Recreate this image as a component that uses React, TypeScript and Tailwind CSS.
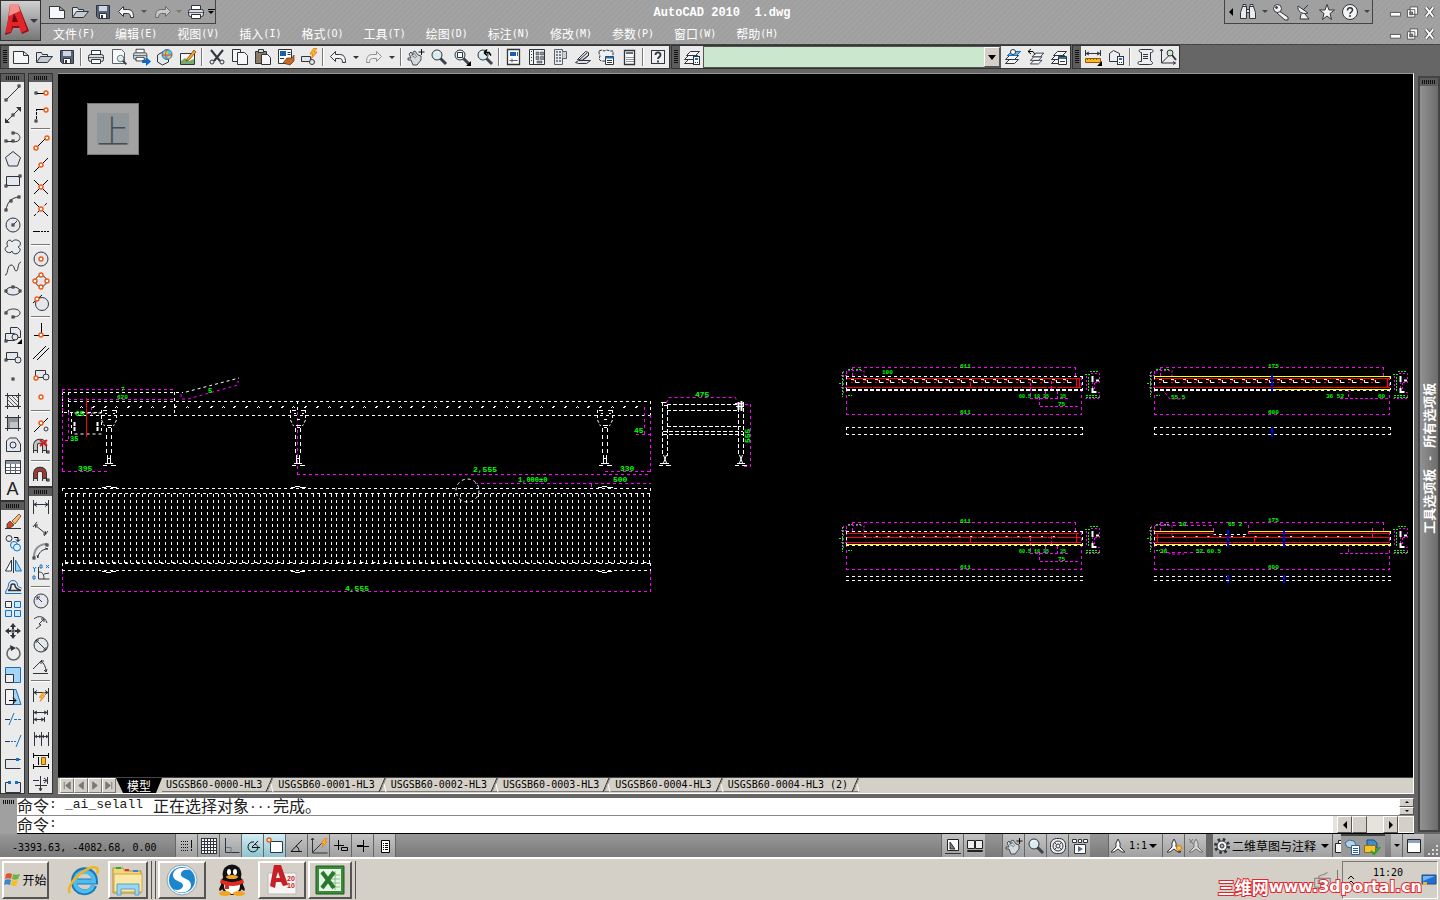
import type { ReactNode } from "react";

const INK = "#30353d";
const ORANGE = "#f0590f";
const BLUE = "#1273c4";

/* ---------- icon primitives ---------- */

function Sq({ x, y }: { x: number; y: number }) {
    return <rect x={x - 1} y={y - 1} width="2" height="2" fill="#ebebeb" stroke="#222" />;
}

function Dot({ x, y }: { x: number; y: number }) {
    return <circle cx={x} cy={y} r="2" fill="#fff" stroke={ORANGE} strokeWidth="1.4" />;
}

const sheet = <path d="M1.5 3.5h10l5 4v8h-15z M11.5 3.5v4h5" fill="#f6f7f9" stroke={INK} />;
const folder = (
    <g stroke={INK}>
        <path d="M1.5 14V4.5h5l1 2h5v3" fill="#dfe3e8" />
        <path d="M1.5 14.5l4-6h12l-5 6z" fill="#c3cad1" />
    </g>
);
const floppy = (
    <g>
        <path d="M2.5 2.5h13v13h-11l-2-2z" fill="#56657a" stroke={INK} />
        <path d="M5 3h8v5H5z" fill="#cdd6e2" />
        <path d="M5.5 10.5h7v5h-7z" fill="#fff" stroke={INK} />
        <path d="M7 12h2v3H7z" fill={INK} />
    </g>
);
const undo = <path d="M1.5 8.5l5-5v3h4c4 0 6 2 6 8h-3c0-3-1-4-3-4h-4v3z" fill="#f3f4f6" stroke={INK} />;
const printer = (
    <g stroke={INK}>
        <path d="M4.5 6V2.5h9V6" fill="#fff" />
        <rect x="1.5" y="6.5" width="15" height="7" rx="2" fill="#d7dbe0" />
        <path d="M4.5 11.5h9v4h-9z" fill="#fff" />
        <path d="M2 9.5h14" stroke="#59616c" />
    </g>
);
const lens = (
    <g>
        <path d="M10 10l6 6" stroke="#3b434d" strokeWidth="3" />
        <circle cx="7" cy="7" r="5" fill="#d9edf0" stroke={INK} />
        <path d="M4 6c1-2 3-3 5-2" stroke="#fff" fill="none" />
    </g>
);
const hand = (
    <g>
        <path d="M2 6l2-2 2 3 0-3 2-1 3 4 3 1v4l-4 5H6L4 12H1l0-2 3 0z" fill="#d5dadf" stroke="#454c55" />
        <path d="M4 7l5 3M7 5l3 4" stroke="#79818a" />
        <path d="M14.5 1v6M11.5 4h6" stroke="#111" />
    </g>
);
const bolt = <path d="M12 2l-4 6h3l-2 5 6-7h-3l3-4z" fill="#ffc21e" stroke="#e26c0e" strokeWidth=".8" />;
const layers = (
    <g stroke={INK} fill="#f5f6f8">
        <path d="M1.5 15.5l4-4h9l-4 4z" />
        <path d="M1.5 11.5l4-4h9l-4 4z" />
        <path d="M3.5 7.5l4-4h9l-4 4z" />
    </g>
);
const calc = (
    <g>
        <rect x="10.5" y="8.5" width="6" height="8" fill="#fff" stroke={INK} />
        <path d="M12 10h3v2h-3z" fill={BLUE} />
        <path d="M12 14.5h3" stroke={INK} strokeDasharray="1 1" />
    </g>
);
const dimBar = (
    <path d="M1.5 2v14M16.5 2v14M2 6.5h14M5 4.5l-3 2 3 2M13 4.5l3 2-3 2" fill="none" stroke={INK} />
);
const magnet = (c: string) => (
    <g>
        <path d="M3.5 15V7c0-5 9-5 9 0v8" fill="none" stroke="#333" strokeWidth="5" />
        <path d="M3.5 12V7c0-5 9-5 9 0v5" fill="none" stroke={c} strokeWidth="3" />
        <path d="M2 13h3v2H2zM11 13h3v2h-3z" fill="#ddd" />
        <Sq x={16} y={14} />
    </g>
);
const person = (c: string) => <path d="M9 2l2 4v4l5 5h-3l-4-3-4 3H2l5-5V6z" fill="#fafafa" stroke={c} />;

const icons: Record<string, ReactNode> = {
    new: sheet,
    open: folder,
    save: floppy,
    undo,
    redo: <g transform="translate(18 0) scale(-1 1)" opacity=".5">{undo}</g>,
    print: printer,
    preview: (
        <g>
            <path d="M2.5 1.5h9l3 3v11h-12z" fill="#f8f8f8" stroke="#59616c" />
            <g transform="translate(6 6) scale(.65)">{lens}</g>
        </g>
    ),
    publish: (
        <g>
            <g transform="translate(-1 -1) scale(.9)">{printer}</g>
            <path d="M9 12h4V9l5 4.5-5 4.5v-3H9z" fill="#0c68c8" />
        </g>
    ),
    globe: (
        <g>
            <path d="M1.5 7l5-3 6 3v7l-6 3-5-3z" fill="#e6eaee" stroke={INK} />
            <circle cx="11" cy="6.5" r="5" fill="#5cc5ef" stroke="#3b6f94" />
            <path d="M8 4l3-1 1 3-3 2zM12 8l3-1-2 4z" fill="#f5d21c" />
            <path d="M11 2c-2 3-2 6 0 9M6 7h10" stroke="#e2462a" fill="none" />
        </g>
    ),
    markup: (
        <g>
            <path d="M1.5 5.5h14v11h-14z" fill="#f4f7f4" stroke={INK} />
            <path d="M2 13l4-3 4 3 5-2v5H2z" fill="#79a86c" />
            <path d="M8 11l7-9 2 2-7 8-3 1z" fill="#f5a623" stroke="#7b3b0c" strokeWidth=".7" />
        </g>
    ),
    cut: (
        <g fill="none" stroke={INK}>
            <path d="M3 2l9 11M15 2L6 13" strokeWidth="2" />
            <circle cx="4" cy="14" r="2" />
            <circle cx="14" cy="14" r="2" />
        </g>
    ),
    copy: (
        <g stroke={INK} fill="#f7f7f9">
            <path d="M1.5 1.5h8v12h-8z" />
            <path d="M6.5 4.5h7l3 3v9h-10z" />
        </g>
    ),
    paste: (
        <g stroke={INK}>
            <path d="M1.5 3.5h11v12h-11z" fill="#8c7b62" />
            <path d="M4.5 1.5h5v3h-5z" fill="#d5d8dc" />
            <path d="M7.5 6.5h6l3 3v7h-9z" fill="#f7f7f9" />
        </g>
    ),
    match: (
        <g>
            <path d="M1.5 1.5h13v14h-13z" fill="#fff" stroke={INK} />
            <path d="M3 3h6v5H3z" fill="#1c5fae" />
            <path d="M10.5 4.5h3M10.5 6.5h3M3 10.5h4" stroke={INK} />
            <path d="M6 15l4-5 5 0 2-3 0 6-4 4z" fill="#c46a28" stroke="#64310c" strokeWidth=".7" />
        </g>
    ),
    block: (
        <g>
            <path d="M1.5 8.5h9v5h-9z" fill="#dfe4ea" stroke={INK} />
            <circle cx="12" cy="14" r="2.5" fill="#e5e9ee" stroke={INK} />
            <g transform="translate(2 -2)">{bolt}</g>
        </g>
    ),
    pan: hand,
    zoom: lens,
    zoomWin: (
        <g>
            {lens}
            <path d="M4.5 4.5h5v5h-5z" fill="#fff" stroke={INK} />
            <path d="M18 13v5h-5z" fill="#000" />
        </g>
    ),
    zoomPrev: (
        <g>
            {lens}
            <path d="M8 4.5h5l2 3M8 4.5l3-3M8 4.5l3 3" stroke="#000" strokeWidth="1.5" fill="none" />
        </g>
    ),
    props: (
        <g>
            <path d="M2.5 1.5h12v15h-12z" fill="#fff" stroke={INK} strokeWidth="1.3" />
            <path d="M5 4h6v4H5z" fill="#1c5fae" />
            <path d="M4.5 12.5h8M7 10.5v4M12.5 4v4" stroke="#555e69" />
        </g>
    ),
    design: (
        <g>
            <path d="M1.5 1.5h15v15h-15zM5.5 2v14" fill="#f4f5f7" stroke={INK} />
            <path d="M8 4h3v3H8zM12.5 4h3v3h-3zM8 8.5h3v3H8zM12.5 8.5h3v3h-3zM9 13h5v2H9z" fill="#8e97a2" stroke={INK} strokeWidth=".5" />
            <path d="M3.5 3v12" stroke={INK} strokeDasharray="1 2" />
        </g>
    ),
    palettes: (
        <g>
            <path d="M3.5 1.5h8v15h-8z" fill="#e9ebee" stroke="#59616c" />
            <path d="M11.5 3.5h4v7h-4" fill="#cdd2d8" stroke="#59616c" />
            <path d="M6 3v12M9 3v12" stroke="#7b838d" strokeWidth="2" strokeDasharray="2 1" />
        </g>
    ),
    sheets: (
        <g stroke={INK} fill="#dfe3e8">
            <path d="M1.5 14.5l3-2h12l-4 3h-8z" />
            <path d="M3.5 11.5l8-8 3 1v3l-6 5z" />
            <path d="M5 12l8-7M7 13l8-6" />
        </g>
    ),
    markups: (
        <g>
            <path d="M2 3l3-1 2 1 3-1 3 1 3 0 0 4-1 2 1 3-3 1H4l-2-2 1-3-1-3z" fill="#eef0f3" stroke={INK} strokeDasharray="3 1" />
            <path d="M8.5 8.5h8v8h-8z" fill="#fff" stroke={INK} />
            <path d="M8.5 9.5h8" stroke={BLUE} strokeWidth="2" />
            <path d="M10 12.5h5M10 14.5h5" stroke={INK} />
        </g>
    ),
    calc: (
        <g>
            <path d="M4.5 2.5h10v14h-10z" fill="#fafafa" stroke={INK} strokeWidth="1.3" />
            <path d="M6 4h7v2H6z" fill="#60707f" />
            <path d="M6.5 9.5h7M6.5 11.5h7M6.5 13.5h7" stroke={INK} strokeDasharray="1 1" />
        </g>
    ),
    help: (
        <g>
            <rect x="2.5" y="2.5" width="13" height="13" fill="#eef0f3" stroke={INK} />
            <path d="M6.5 7c0-3.5 5-3.5 5 0 0 2-2.5 2-2.5 4M9 12.5v2" fill="none" stroke={INK} strokeWidth="1.8" />
        </g>
    ),
    layerProps: (
        <g>
            {layers}
            {calc}
        </g>
    ),
    layerCur: (
        <g>
            {layers}
            <path d="M3.5 7.5l4-4h9l-4 4z" fill="#63b6ec" stroke={BLUE} />
            <circle cx="9" cy="4" r="2.5" fill="#fff" stroke={INK} />
        </g>
    ),
    layerPrev: (
        <g>
            <g transform="translate(2 2) scale(.9)">{layers}</g>
            <path d="M1 3.5h5l2 3M4 1L1 3.5 4 6" stroke="#000" fill="none" />
        </g>
    ),
    layerState: (
        <g>
            {layers}
            <path d="M8.5 8.5h8v8h-8z" fill="#fff" stroke={INK} />
            <path d="M9 10h7" stroke="#34739c" strokeWidth="2" />
            <path d="M10 13.5h5" stroke={INK} />
        </g>
    ),
    distance: (
        <g>
            <path d="M1.5 2v6M16.5 2v6M2 5.5h14M5 4l-3 1.5L5 7M13 4l3 1.5L13 7" stroke={INK} fill="none" />
            <path d="M1.5 10.5h15v4h-15z" fill="#ffb91f" stroke="#94580d" />
            <path d="M3 11.5h12" stroke="#94580d" strokeDasharray="1 2" />
            <path d="M18 13v5h-5z" />
        </g>
    ),
    region: (
        <g>
            <path d="M2.5 13.5v-8l4-3 6 3v8z" fill="#eceef1" stroke={INK} />
            {calc}
        </g>
    ),
    list: (
        <g>
            <path d="M4.5 1.5h11c2 0 2 3 0 3h-1v8l2 2c0 2-1 2-3 2h-10c-2 0-2-3 0-3h2v-9c-3 0-3-3-1-3z" fill="#eceef1" stroke={INK} />
            <path d="M7 6.5h5M7 8.5h5M7 10.5h5" stroke={INK} />
        </g>
    ),
    locate: (
        <g fill="none" stroke={INK}>
            <path d="M2.5 1v14h14M2.5 15l9-9M1 3l1.5-2L4 3M14 13.5l2.5 1.5-2.5 1.5" />
            <circle cx="11" cy="5" r="3" fill="#cbe7cb" />
            <path d="M13 7l4 5" strokeWidth="2" />
        </g>
    ),
    /* draw */
    line: (
        <g>
            <path d="M2 16L16 2" stroke={INK} />
            <Sq x={2} y={16} />
            <Sq x={15} y={2} />
        </g>
    ),
    xline: (
        <g>
            <path d="M2 16L16 2" stroke={INK} />
            <path d="M1 12v5h5zM17 6V1h-5z" fill={INK} />
            <Sq x={9} y={9} />
        </g>
    ),
    pline: (
        <g>
            <path d="M2 13.5h7c9 2 9-9 1-8.5" stroke={INK} fill="none" />
            <Sq x={2} y={13} />
            <Sq x={9} y={13} />
            <Sq x={9} y={5} />
        </g>
    ),
    polygon: <path d="M9 1.5l7.5 6-3 8.5h-9l-3-8.5z" fill="#e4e8ec" stroke={INK} />,
    rect: (
        <g>
            <path d="M2.5 4.5h13v9h-13z" fill="#e4e8ec" stroke={INK} />
            <Sq x={2} y={14} />
            <Sq x={16} y={4} />
        </g>
    ),
    arc: (
        <g>
            <path d="M2 16C3 9 7 3 16 3" stroke={INK} fill="none" />
            <Sq x={2} y={16} />
            <Sq x={7} y={7} />
            <Sq x={15} y={3} />
        </g>
    ),
    circle: (
        <g>
            <circle cx="9" cy="9" r="7" fill="#e4e8ec" stroke={INK} />
            <path d="M9 9l4-4" stroke={INK} />
            <Sq x={9} y={9} />
        </g>
    ),
    cloud: (
        <path
            d="M8 4c-1-3-5-2-5 1 0 1 0 2 1 3-3 1-4 4-1 6 2 1 4 1 5-1 0 3 5 4 7 1 2-2 1-4-1-5 3-1 3-5 1-6-3-2-6-1-7 1z"
            fill="#e9ecef"
            stroke={INK}
        />
    ),
    spline: <path d="M1 15c3 1 2-10 6-10s3 6 5 6c3 0 1-8 5-9" stroke={INK} fill="none" />,
    ellipse: (
        <g>
            <ellipse cx="9" cy="9" rx="7" ry="4" fill="#e4e8ec" stroke={INK} />
            <Sq x={2} y={9} />
            <Sq x={16} y={9} />
            <Sq x={9} y={5} />
        </g>
    ),
    ellipseArc: (
        <g>
            <path d="M2 10c-1-6 14-7 14-1 0 4-7 4-7 4" fill="none" stroke={INK} />
            <Sq x={2} y={9} />
            <Sq x={9} y={13} />
        </g>
    ),
    insert: (
        <g stroke={INK} fill="#e4e8ec">
            <path d="M6.5 1.5h7l3 3v7h-10z" />
            <path d="M1.5 7.5h9v7h-9z" />
            <circle cx="11" cy="11" r="3" />
            <path d="M18 13v5h-5z" fill="#000" stroke="none" />
            <Sq x={2} y={15} />
        </g>
    ),
    makeBlock: (
        <g stroke={INK} fill="#e4e8ec">
            <path d="M2.5 4.5h11v7h-11z" />
            <circle cx="14" cy="12" r="3" />
            <Sq x={2} y={12} />
        </g>
    ),
    point: <Sq x={9} y={9} />,
    hatch: (
        <g stroke={INK} fill="none">
            <path d="M3.5 1v16M14.5 1v16M1 3.5h16M1 14.5h16" />
            <path d="M4 8l6 6M4 4l10 10M8 4l6 6M12 4l2 2M4 12l2 2" strokeWidth=".8" />
        </g>
    ),
    gradient: (
        <g stroke={INK}>
            <rect x="4" y="4" width="10" height="10" fill="#8f9398" stroke="none" />
            <rect x="6" y="8" width="8" height="6" fill="#c2c5c8" stroke="none" />
            <path d="M3.5 1v16M14.5 1v16M1 3.5h16M1 14.5h16" />
        </g>
    ),
    regionDraw: (
        <g stroke={INK} fill="#e4e8ec">
            <path d="M2.5 15.5V5l3-3h7l4 6v7.5z" />
            <circle cx="9" cy="9" r="3" />
        </g>
    ),
    table: (
        <g>
            <path d="M1.5 2.5h15v13h-15z" fill="#fff" stroke={INK} />
            <path d="M2 3h14v3H2z" fill="#8d949c" />
            <path d="M2 9.5h14M2 12.5h14M6.5 6v9M11.5 6v9" stroke="#59616c" />
        </g>
    ),
    /* modify */
    erase: (
        <g>
            <path d="M1 16.5h16" stroke={INK} />
            <path d="M8 9l7-7 2 2-6 8z" fill="#f0bf7c" stroke="#6f3b10" strokeWidth=".8" />
            <path d="M6 9l4 4-4 3H3v-4z" fill="#d2481d" stroke={INK} strokeWidth=".8" />
        </g>
    ),
    copyObj: (
        <g fill="#dceefb">
            <circle cx="5" cy="4.5" r="3" fill="none" stroke={INK} />
            <path d="M10 3.5h4v4M12 5.5l2 2 2-2" fill="none" stroke="#000" />
            <circle cx="10" cy="11" r="3.5" stroke={BLUE} />
            <circle cx="13" cy="13.5" r="3.5" stroke={BLUE} />
        </g>
    ),
    mirror: (
        <g>
            <path d="M7.5 4v11h-6z" fill="#fff" stroke={INK} />
            <path d="M9.5 1v16" stroke={INK} />
            <path d="M11.5 4v11h6z" fill="#a6d4f4" stroke={BLUE} />
        </g>
    ),
    offset: (
        <g fill="none">
            <path d="M4 12.5h13M4 12.5c3-1 3-3 3-5 0-2 4-2 4 0 0 3 2 3 6 5" stroke={INK} strokeWidth="1.5" />
            <path d="M1.5 15.5h16M1.5 15.5c0-4 3-5 3-8.5 0-6 9-6 9 0 0 2 2 2 4 3" stroke={BLUE} />
        </g>
    ),
    array: (
        <g>
            <path d="M1.5 1.5h6v6h-6z" fill="#f3f3f3" stroke={INK} />
            <path d="M10.5 1.5h6v6h-6zM1.5 10.5h6v6h-6zM10.5 10.5h6v6h-6z" fill="#cfe6f7" stroke={BLUE} />
        </g>
    ),
    move: (
        <g fill={INK}>
            <path d="M9 1l3 4h-2v2H8V5H6zM9 17l3-4h-2v-2H8v2H6zM1 9l4-3v2h2v2H5v2zM17 9l-4-3v2h-2v2h2v2z" />
            <Sq x={9} y={9} />
        </g>
    ),
    rotate: (
        <g>
            <path d="M12 3.5a6.5 6.5 0 1 1-5 0" fill="none" stroke="#59616c" strokeWidth="1.5" />
            <path d="M6 1l6 3-5 3z" fill={INK} />
        </g>
    ),
    scale: (
        <g>
            <path d="M1.5 1.5h15v15h-7v-8h-8z" fill="#a6d4f4" stroke={BLUE} />
            <path d="M1.5 8.5h8v8h-8z" fill="#eee" stroke={INK} />
        </g>
    ),
    stretch: (
        <g>
            <path d="M9 1.5h3l5 15H9z" fill="#a6d4f4" stroke={BLUE} />
            <path d="M1.5 1.5h8v15h-8z" fill="#f3f3f3" stroke={INK} />
            <path d="M5 12.5h7M9 9.5l3 3-3 3" stroke="#000" fill="none" />
        </g>
    ),
    trim: (
        <g stroke={BLUE}>
            <path d="M1 9.5h5" stroke={INK} />
            <path d="M5 15L10 3" />
            <path d="M10 9.5h8" strokeDasharray="3 1" />
        </g>
    ),
    extend: (
        <g stroke={BLUE}>
            <path d="M1 9.5h5" stroke={INK} />
            <path d="M7 9.5h6" strokeDasharray="2 1" />
            <path d="M12 15l5-12" />
        </g>
    ),
    breakPt: (
        <g>
            <path d="M16.5 5.5h-15v9h15" stroke={INK} fill="#e4e8ec" />
            <path d="M12 4h3v3h-3z" fill={BLUE} />
        </g>
    ),
    breakObj: (
        <g>
            <path d="M5 6.5H1.5v10h15v-10H13" stroke={INK} fill="#e4e8ec" />
            <path d="M4 5h3v3H4zM11 5h3v3h-3z" fill={BLUE} />
        </g>
    ),
    /* object snap */
    track: (
        <g>
            <path d="M4 9.5h8" stroke="#000" />
            <Sq x={4} y={9} />
            <Dot x={14} y={9} />
        </g>
    ),
    from: (
        <g>
            <path d="M4.5 3.5H12" stroke="#000" />
            <path d="M4.5 13V3" stroke="#000" strokeDasharray="3 1" />
            <Sq x={4} y={15} />
            <Dot x={14} y={4} />
        </g>
    ),
    endpoint: (
        <g>
            <path d="M4 14L15 3" stroke="#000" />
            <Dot x={4} y={14} />
            <Dot x={15} y={4} />
        </g>
    ),
    midpoint: (
        <g>
            <path d="M2 16L16 2" stroke="#000" />
            <Dot x={9} y={9} />
        </g>
    ),
    intersect: (
        <g>
            <path d="M2 16L16 2M2 2l14 14" stroke="#000" />
            <Dot x={9} y={9} />
        </g>
    ),
    apparent: (
        <g>
            <path d="M2 16L16 2" stroke="#000" strokeDasharray="3 2" />
            <path d="M2 2l14 14" stroke="#000" />
            <Dot x={9} y={9} />
        </g>
    ),
    extension: <path d="M1 9.5h7M9 9.5h2M12 9.5h2M15 9.5h2" stroke="#000" />,
    center: (
        <g>
            <circle cx="9" cy="9" r="7" fill="#e4e8ec" stroke={INK} />
            <Dot x={9} y={9} />
        </g>
    ),
    quadrant: (
        <g>
            <circle cx="9" cy="9" r="5.5" fill="#e4e8ec" stroke={INK} />
            <Dot x={9} y={3} />
            <Dot x={9} y={15} />
            <Dot x={3} y={9} />
            <Dot x={15} y={9} />
        </g>
    ),
    tangent: (
        <g>
            <circle cx="10" cy="10" r="6.5" fill="#e4e8ec" stroke={INK} />
            <path d="M1 9l9-8" stroke="#000" />
            <Dot x={5} y={5} />
        </g>
    ),
    perp: (
        <g>
            <path d="M9.5 1v11M2 13.5h15" stroke="#000" />
            <Dot x={9} y={13} />
        </g>
    ),
    parallel: <path d="M1 15L14 2M5 16L17 4" stroke="#000" />,
    insertPt: (
        <g>
            <path d="M3.5 4.5h10v7h-10z" fill="#e4e8ec" stroke={INK} />
            <circle cx="14" cy="11" r="3" fill="#e4e8ec" stroke={INK} />
            <Dot x={4} y={12} />
        </g>
    ),
    node: <Dot x={9} y={9} />,
    nearest: (
        <g>
            <path d="M2 16L16 2" stroke="#000" />
            <Dot x={9} y={7} />
            <circle cx="14" cy="13" r="2" fill="none" stroke={INK} />
        </g>
    ),
    snapNone: (
        <g>
            {magnet("#c4c4c4")}
            <path d="M8 2l7 6M15 2L8 8" stroke="#d91515" strokeWidth="2" />
        </g>
    ),
    snapSet: magnet("#9b3b35"),
    /* dimension */
    dimLinear: dimBar,
    dimAligned: (
        <g stroke={INK} fill="none">
            <path d="M3 5l11 9M1 7l4-5M12 16l4-5M3 5l1 3M3 5h3M14 14l-3 0M14 14l-1-3" />
        </g>
    ),
    dimArc: (
        <g fill="none" stroke={INK}>
            <path d="M2 15C2 7 7 2 15 2" stroke="#8b9199" strokeWidth="2" />
            <path d="M6 16c0-5 4-9 10-9M6 16l-1-3M16 7l-3-1" />
            <Sq x={2} y={16} />
            <Sq x={15} y={3} />
        </g>
    ),
    dimOrd: (
        <g fill="none">
            <path d="M6.5 3v12h11M7 8c4 0 5 3 5 7M12 10l5-1" stroke={INK} />
            <path d="M1 3l1.5 2L4 3M2.5 5v3M8 1h2v3H8zM14 1l3 3M17 1l-3 3M1 12h2v3H1z" stroke={BLUE} />
        </g>
    ),
    dimRadius: (
        <g stroke={INK}>
            <circle cx="9" cy="9" r="7" fill="#e4e8ec" />
            <path d="M10 10L5 5M5 8V5h3" fill="none" />
        </g>
    ),
    dimJog: (
        <g fill="none" stroke={INK}>
            <path d="M2 5c4-4 11-3 13 4M4 15l5-4-2-1 5-5M9 5h3v3" />
        </g>
    ),
    dimDia: (
        <g stroke={INK}>
            <circle cx="9" cy="9" r="7" fill="#e4e8ec" />
            <path d="M4 4l10 10M4 7V4h3M14 11v3h-3" fill="none" />
        </g>
    ),
    dimAng: <path d="M1 15.5h15M1 11L10 2M9 3c3 2 5 6 5 11M9 6V3h3M12 12l2 2 1-3" fill="none" stroke={INK} />,
    dimQuick: (
        <g>
            {dimBar}
            <g transform="translate(1 5) scale(.8)">{bolt}</g>
        </g>
    ),
    dimBase: <path d="M1.5 2v14M15.5 2v5M12.5 9v5M2 4.5h13M2 11.5h10M5 3L2 4.5 5 6M12 3l3 1.5L12 6M5 10l-3 1.5L5 13M9 10l3 1.5L9 13" stroke={INK} fill="none" />,
    dimCont: <path d="M2.5 2v14M9.5 2v14M16.5 2v14M3 6.5h13M5 5L3 6.5 5 8M7 5l2 1.5L7 8M12 5l-2 1.5L12 8M14 5l2 1.5L14 8" stroke={INK} fill="none" />,
    dimSpace: (
        <g>
            <path d="M1.5 1v5M16.5 1v5M2 3.5h14M1.5 12v5M16.5 12v5M2 14.5h14M6.5 5v8" stroke="#000" fill="none" />
            <path d="M9.5 5.5h4v7h-4z" fill="#ffb91f" stroke="#94580d" />
        </g>
    ),
    dimBreak: <path d="M1 6.5h6M11 6.5h3M15.5 3v7M12 4l3 2.5L12 9M8.5 2v14M3 11.5h12M7 14l1.5 3 1.5-3" stroke={INK} fill="none" />,
    /* info center */
    binoculars: (
        <g fill="#e9ebee" stroke={INK}>
            <path d="M3.5 3.5h4v12h-6v-6zM10.5 3.5h4l2 6v6h-6z" />
            <path d="M4 1.5h3v2H4zM11 1.5h3v2h-3zM7.5 6.5h3v3h-3z" />
        </g>
    ),
    key: (
        <g fill="#f1f2f4" stroke={INK}>
            <path d="M7 8l9 6v3h-3L5 10z" />
            <circle cx="5.5" cy="5.5" r="4" />
            <circle cx="4.5" cy="4.5" r="1" fill={INK} />
        </g>
    ),
    dish: (
        <g fill="#f1f2f4" stroke={INK}>
            <path d="M3 3c-1 5 4 9 10 7z" />
            <path d="M8 7l5-5M6 11l-1 5h9l-4-5" />
        </g>
    ),
    star: <path d="M9 1.5l2 5.5h5.5l-4.5 3.5 1.5 6L9 13l-4.5 3.5 1.5-6L1.5 7H7z" fill="#f4f4f4" stroke={INK} />,
    helpRound: (
        <g>
            <circle cx="9" cy="9" r="7.5" fill="#f4f4f4" stroke={INK} />
            <path d="M6.5 7.5c0-4 5-3.5 5-.5 0 2-2.5 2-2.5 4M9 12v2" fill="none" stroke={INK} strokeWidth="1.5" />
        </g>
    ),
    /* status bar */
    snap: (
        <g stroke="#111">
            <path d="M3 4.5h8M3 7.5h8M3 10.5h8M3 13.5h8" strokeDasharray="1 1" />
            <path d="M13.5 3v8M13.5 12v2" />
        </g>
    ),
    grid: (
        <g>
            <path d="M1 1h16v16H1z" fill="#f6f6f6" />
            <path d="M1.5 1v16M4.5 1v16M7.5 1v16M10.5 1v16M13.5 1v16M16.5 1v16M1 1.5h16M1 4.5h16M1 7.5h16M1 10.5h16M1 13.5h16M1 16.5h16" stroke={INK} />
        </g>
    ),
    ortho: (
        <g fill="none">
            <path d="M3.5 1v14.5h14" stroke={INK} />
            <path d="M4 10.5h5v5" stroke="#5a7893" />
        </g>
    ),
    polar: (
        <g fill="none" stroke="#111">
            <path d="M14 10a5 5 0 1 1-4-5M8 10.5h8M8 10l6-6M11 7c2 1 3 2 3 4" />
        </g>
    ),
    osnap: (
        <g>
            <path d="M4.5 4.5h12v11h-12z" fill="#fff" stroke={INK} />
            <Dot x={3} y={3} />
        </g>
    ),
    otrack: <path d="M14 3L3 14.5h11M8 9c2 1 3 3 3 5" stroke="#111" fill="none" />,
    ducs: (
        <g>
            <path d="M2.5 1v15h15M3 15l9-9M1 3l1.5-2L4 3" stroke={INK} fill="none" />
            <g transform="translate(5 0) scale(.8)">{bolt}</g>
        </g>
    ),
    dyn: <path d="M6.5 3v10M2 8.5h10M9.5 10.5h6v3h-6z" stroke="#000" fill="none" />,
    lwt: (
        <g stroke="#000">
            <path d="M9.5 3v12" />
            <path d="M3 9h7" strokeWidth="2" />
            <path d="M10 9.5h5" />
        </g>
    ),
    qp: (
        <g>
            <path d="M5.5 3.5h8v12h-8z" fill="#fff" stroke="#000" />
            <path d="M7 6.5h6M7 8.5h6M7 10.5h6M7 12.5h6" stroke="#000" strokeDasharray="1 1 3 1" />
        </g>
    ),
    model: (
        <g>
            <path d="M3.5 2.5h11v11h-11z" fill="#fff" stroke="#222" />
            <path d="M6 5l5 7H6zM1 16.5h16" fill="#777" stroke="#333" />
        </g>
    ),
    layouts: (
        <g fill="#eee" stroke="#222">
            <path d="M1.5 3.5h7v8h-7zM9.5 3.5h7v8h-7zM1.5 13.5h15v1h-15z" />
        </g>
    ),
    wheel: (
        <g fill="#eceef1" stroke={INK}>
            <rect x="1.5" y="1.5" width="15" height="15" rx="6" />
            <circle cx="9" cy="9" r="5" />
            <circle cx="9" cy="9" r="2" />
            <path d="M5 5l2 2M13 5l-2 2M5 13l2-2M13 13l-2-2" />
        </g>
    ),
    motion: (
        <g fill="#fff" stroke={INK}>
            <path d="M1.5 2.5h4v3h-4zM7.5 2.5h3v3h-3zM12.5 2.5h4v3h-4zM3.5 7.5h11v9h-11z" />
            <path d="M7 9l5 3-5 3z" fill="#5b6c80" stroke="none" />
        </g>
    ),
    annoVis: (
        <g>
            {person(INK)}
            <circle cx="14" cy="11" r="2.5" fill="#ffc53a" stroke="#d8770e" />
            <path d="M13 14h2v2h-2z" fill="#555" />
        </g>
    ),
    anno: person(INK),
    annoAuto: (
        <g opacity=".5">
            {person(INK)}
            <path d="M2 2l4 5M6 2L3 6" stroke={INK} />
        </g>
    ),
    gear: (
        <g>
            <circle cx="9" cy="9" r="6.5" fill="none" stroke={INK} strokeWidth="3" strokeDasharray="2.5 2.6" />
            <circle cx="9" cy="9" r="5" fill="#f3f3f3" stroke={INK} />
            <circle cx="9" cy="9" r="2" fill="#a8a8a8" stroke={INK} />
        </g>
    ),
    tray: (
        <g>
            <path d="M2 5l4-3 5 1 2 4-4 3-5-1z" fill="#b7d0e4" stroke="#3d6d94" />
            <path d="M8.5 7.5h8v9h-8z" fill="#fff" stroke="#2b6095" />
            <path d="M10 10.5h5M10 12.5h5M10 14.5h5" stroke="#2b6095" />
        </g>
    ),
    xref: (
        <g>
            <path d="M4 2h7l3 3v5H4z" fill="#3e8ed0" stroke="#1d4e83" />
            <path d="M1.5 7.5h11v7h-11z" fill="#f2c52d" stroke="#94700b" />
            <path d="M8 13l3 3 6-7" stroke="#2ca02c" strokeWidth="2" fill="none" />
        </g>
    ),
    window: (
        <g>
            <path d="M2.5 2.5h13v13h-13z" fill="#fff" stroke="#222" />
            <path d="M3 3h12v3H3z" fill="#8fa3bd" />
        </g>
    ),
    lock: <path d="M2.5 6.5h6v9h-6zM5.5 6.5v-3h4v3" fill="#f6f6f6" stroke="#222" />,
};

function Icon({ name }: { name: string }) {
    return (
        <svg className="size-[18px] shrink-0" viewBox="0 0 18 18" fill="#000" aria-hidden="true">
            {icons[name]}
        </svg>
    );
}

function Down({ className = "border-t-[#333]" }: { className?: string }) {
    return <span className={`size-0 border-x-[3px] border-t-[3px] border-x-transparent ${className}`} />;
}

/* ---------- toolbars ---------- */

const SEP = "|";
const DROP = "v";

function Grip({ vertical = false }: { vertical?: boolean }) {
    return vertical ? (
        <div className="flex w-2 shrink-0 items-center justify-center bg-[#5c5c5c]">
            <div className="h-3.5 w-1 bg-[linear-gradient(#111_1px,transparent_1px)] bg-size-[2px_2px]" />
        </div>
    ) : (
        <div className="flex h-2 shrink-0 items-center justify-center bg-[#5c5c5c]">
            <div className="h-1 w-3.5 bg-[linear-gradient(90deg,#111_1px,transparent_1px)] bg-size-[2px_2px]" />
        </div>
    );
}

function HTools({ items }: { items: string[] }) {
    return (
        <>
            {items.map((item, i) => {
                if (item === SEP) return <span key={i} className="mx-[2px] h-[18px] w-[2px] shrink-0 self-center border-l border-[#777] bg-white" />;
                if (item === DROP)
                    return (
                        <button key={i} aria-label="下拉" className="flex w-[13px] shrink-0 items-center justify-center">
                            <Down />
                        </button>
                    );
                return (
                    <button key={i} aria-label={item} className="flex w-[23px] shrink-0 items-center justify-center">
                        <Icon name={item} />
                    </button>
                );
            })}
        </>
    );
}

function HBar({ children }: { children: ReactNode }) {
    return <div className="flex h-6 items-stretch border border-[#333] bg-[#ebebeb]">{children}</div>;
}

function VBar({ items, className = "" }: { items: string[]; className?: string }) {
    return (
        <div className={`flex w-[25px] flex-col border border-[#333] bg-[#ebebeb] ${className}`}>
            <Grip />
            {items.map((item, i) =>
                item === SEP ? (
                    <div key={i} className="flex h-1.5 shrink-0 items-center px-0.5">
                        <span className="h-0.5 w-full border-t border-[#777] bg-white" />
                    </div>
                ) : (
                    <button key={i} aria-label={item} className="flex h-[22px] shrink-0 items-center justify-center">
                        {item === "text" ? (
                            <span className="font-['Liberation_Sans'] text-[18px] leading-5 text-[#222]">A</span>
                        ) : (
                            <Icon name={item} />
                        )}
                    </button>
                ),
            )}
        </div>
    );
}

const standard = [
    "new", "open", "save", SEP, "print", "preview", "publish", "globe", "markup", SEP,
    "cut", "copy", "paste", "match", "block", SEP, "undo", DROP, "redo", DROP, SEP,
    "pan", "zoom", "zoomWin", "zoomPrev", SEP, "props", "design", "palettes", "sheets", "markups", "calc", SEP, "help",
];
const draw = [
    "line", "xline", "pline", "polygon", "rect", "arc", "circle", "cloud", "spline", "ellipse",
    "ellipseArc", "insert", "makeBlock", "point", "hatch", "gradient", "regionDraw", "table", "text",
];
const modify = [
    "erase", "copyObj", "mirror", "offset", "array", "move", "rotate", "scale", "stretch", "trim", "extend", "breakPt", "breakObj",
];
const osnap = [
    "track", "from", SEP, "endpoint", "midpoint", "intersect", "apparent", "extension", SEP, "center", "quadrant", "tangent", SEP,
    "perp", "parallel", "insertPt", "node", SEP, "nearest", "snapNone", SEP, "snapSet",
];
const dims = [
    "dimLinear", "dimAligned", "dimArc", "dimOrd", SEP, "dimRadius", "dimJog", "dimDia", "dimAng", SEP,
    "dimQuick", "dimBase", "dimCont", "dimSpace", "dimBreak",
];

const menus = [
    ["文件", "F"], ["编辑", "E"], ["视图", "V"], ["插入", "I"], ["格式", "O"], ["工具", "T"],
    ["绘图", "D"], ["标注", "N"], ["修改", "M"], ["参数", "P"], ["窗口", "W"], ["帮助", "H"],
];

function WindowControls() {
    return (
        <div className="flex items-center gap-1">
            <button aria-label="最小化" className="flex h-4 w-[13px] items-center justify-center">
                <svg className="h-3.5 w-3.5" viewBox="0 0 14 14"><path d="M1.5 7.5h11v4h-11z" fill="#fff" stroke="#555" /></svg>
            </button>
            <button aria-label="还原" className="flex h-4 w-[13px] items-center justify-center">
                <svg className="h-3.5 w-3.5" viewBox="0 0 14 14">
                    <path d="M4.5 1.5h8v8h-8zM1.5 4.5h8v8h-8z" fill="#fff" stroke="#555" />
                    <path d="M4 7h3v3H4z" fill="#888" stroke="#555" />
                </svg>
            </button>
            <button aria-label="关闭" className="flex h-4 w-[13px] items-center justify-center">
                <svg className="h-3.5 w-3.5" viewBox="0 0 14 14">
                    <path d="M3 2l8 10M11 2L3 12" stroke="#555" strokeWidth="4" />
                    <path d="M3 2l8 10M11 2L3 12" stroke="#fff" strokeWidth="2" />
                </svg>
            </button>
        </div>
    );
}

function Header() {
    return (
        <header className="flex h-11 shrink-0 bg-[#a0a0a0] bg-[repeating-linear-gradient(135deg,#a3a3a3_0,#a3a3a3_2px,#9f9f9f_2px,#9f9f9f_4px)]">
            <button aria-label="应用程序菜单" className="flex h-[41px] w-[41px] shrink-0 items-center border border-[#333] bg-linear-to-b from-[#d0d0d0] to-[#777]">
                <svg className="h-[39px] w-[39px]" viewBox="0 0 39 39">
                    <path d="M4 34L10 5h8l10 25-7 3-2-6h-7l-2 5z" fill="#8d1015" />
                    <path d="M5 32L9 3h8l9 26-6 3-2-7h-7l-1 6z" fill="#e2252b" />
                    <path d="M13 12l4 9h-6z" fill="#6b0c10" />
                    <path d="M9 3h8l2 7-11 5z" fill="#f2918e" />
                    <path d="M29 18h8l-4 4z" fill="#333a48" />
                </svg>
            </button>
            <div className="flex min-w-0 flex-1 flex-col">
                <div className="flex h-6 items-start justify-between">
                    <div className="flex h-6 w-[175px] items-center border border-l-0 border-t-0 border-[#444] bg-[#a0a0a0] pl-1">
                        <HTools items={["new", "open", "save", "undo"]} />
                        <Down className="mx-1 border-t-[#555]" />
                        <HTools items={["redo"]} />
                        <Down className="mx-0.5 border-t-[#777]" />
                        <HTools items={["print"]} />
                        <button aria-label="自定义" className="flex w-2.5 flex-col items-center gap-px">
                            <span className="h-px w-[7px] bg-black" />
                            <Down className="border-t-black" />
                        </button>
                    </div>
                    <h1 className="pt-[5px] pl-1 font-['Liberation_Mono',monospace] text-[12px] leading-4 font-bold whitespace-pre text-white">
                        AutoCAD 2010  1.dwg
                    </h1>
                    <div className="flex items-center gap-4 pr-1">
                        <div className="flex h-6 items-center border border-t-0 border-[#444] bg-[#a0a0a0] pl-1">
                            <span className="size-0 border-y-4 border-r-4 border-y-transparent border-r-black" />
                            <span className="w-1" />
                            <HTools items={["binoculars"]} />
                            <Down className="mx-0.5 border-t-[#444]" />
                            <HTools items={["key", "dish", "star", "helpRound"]} />
                            <Down className="mx-0.5 border-t-[#444]" />
                        </div>
                        <WindowControls />
                    </div>
                </div>
                <nav className="flex h-5 items-center justify-between pr-1 pl-3">
                    <div className="flex gap-5 text-white">
                        {menus.map(([label, key]) => (
                            <button key={key} className="flex items-center leading-4">
                                <span className="font-['Noto_Sans_CJK_SC',sans-serif] text-[12px]">{label}</span>
                                <span className="font-['DejaVu_Sans_Mono',monospace] text-[10px]">({key})</span>
                            </button>
                        ))}
                    </div>
                    <WindowControls />
                </nav>
            </div>
        </header>
    );
}

function Toolbars() {
    return (
        <div className="flex h-[29px] shrink-0 items-start gap-px border-t border-[#444] bg-[#666]">
            <HBar>
                <Grip vertical />
                <HTools items={standard} />
            </HBar>
            <HBar>
                <Grip vertical />
                <HTools items={["layerProps"]} />
                <div className="relative w-[298px] border border-[#555] bg-white">
                    <select aria-label="图层" className="block h-full w-full appearance-none bg-[#cbe8cf] text-[12px]">
                        <option></option>
                    </select>
                    <span className="pointer-events-none absolute inset-y-0 right-0 flex w-4 items-center justify-center border border-t-white border-r-[#555] border-b-[#555] border-l-white bg-[#d4d0c8]">
                        <span className="size-0 border-x-4 border-t-[5px] border-x-transparent border-t-black" />
                    </span>
                </div>
                <HTools items={["layerCur", "layerPrev", "layerState"]} />
            </HBar>
            <HBar>
                <Grip vertical />
                <HTools items={["distance", "region", SEP, "list", "locate"]} />
            </HBar>
        </div>
    );
}

/* ---------- drawing ---------- */

const WHITE = "#fff";
const PINK = "#f0f";
const GREEN = "#0f0";

function Leg({ x }: { x: number }) {
    return (
        <g stroke={WHITE} fill="none">
            <path d={`M${x - 7.5} 410v10l3 6M${x + 7.5} 410v10l-3 6`} strokeDasharray="3 2" />
            <path d={`M${x - 6} 410.5h4M${x + 3} 410.5h4M${x - 1} 419.5h3M${x - 2} 425.5h5M${x - 1} 427.5h3M${x - 4} 413.5h2M${x + 4} 413.5h2`} />
            <path d={`M${x - 2.5} 428v28M${x + 2.5} 428v28`} strokeDasharray="4 3" />
            <path d={`M${x - 1.5} 455v8M${x + 1.5} 455v8M${x - 2} 458.5h4M${x - 4} 463.5h8M${x - 6} 465.5h4M${x + 2} 465.5h5`} />
        </g>
    );
}

function Label({ x, y, children, size = 8 }: { x: number; y: number; children: string; size?: number }) {
    return (
        <text x={x} y={y} fill={GREEN} fontFamily="Liberation Mono" fontWeight="700" fontSize={size}>
            {children}
        </text>
    );
}

function Conveyor() {
    const slats = Array.from({ length: 100 }, (_, i) => Math.round(65 + i * 5.9) + 0.5);
    const dots = Array.from({ length: 48 }, (_, i) => Math.round(80 + i * 11.8));
    return (
        <g fill="none">
            <g stroke={WHITE} strokeDasharray="3 3">
                <path d="M62 392.5h121" />
                <path d="M68 401.5h583" />
                <path d="M78 415.5h573" />
                <path d="M62 488.5h589M65 493.5h585M65 563.5h585M62 570.5h589" />
                <path d="M62.5 392v24M68.5 392v24M174.5 392v22M650.5 401v15M62.5 488v6M62.5 563v8M650.5 488v6M650.5 563v8M297.5 401v12" />
                <path d="M186 392l53-14" />
                <path d="M71.5 413v21h30v-21zM64 412.5h38" />
                {slats.map((x) => (
                    <path key={x} d={`M${x} 494v69`} />
                ))}
                <circle cx="467.5" cy="490.5" r="11.5" />
            </g>
            <g stroke={WHITE}>
                {dots.map((x, i) => (
                    <path key={x} d={i % 3 ? `M${x} 407.5h2M${x + 1} 406.5h2` : `M${x} 407.5h1M${x + 1} 406.5h1M${x + 2} 407.5h1`} />
                ))}
                {slats.filter((_, i) => i % 2 === 0).map((x) => (
                    <path key={x} d={`M${x} 562.5h3`} />
                ))}
                <path d="M74.5 422v9M97.5 422v10" strokeWidth="2" strokeDasharray="4 1" />
                {[109, 298, 605].map((x) => (
                    <path key={x} d={`M${x - 7} 487.5h4M${x - 3} 486.5h5M${x + 2} 487.5h6M${x - 7} 571.5h4M${x - 3} 572.5h5M${x + 2} 571.5h5`} />
                ))}
            </g>
            <g stroke={PINK} strokeDasharray="3 3">
                <path d="M62 389.5h113M68 399.5h106" />
                <path d="M62.5 390v82M62 471.5h47M68.5 412v28M65 440.5h12M297.5 412v62M297 474.5h354M650.5 415v57M605 471.5h46M644.5 407v27M636 434.5h15M475 483.5h176M591.5 484v5M62.5 571v20M650.5 571v20M62 591.5h589" />
                <path d="M181 394v5h7l50-14v-4M91.5 407v8" />
            </g>
            {[109, 298, 605].map((x) => (
                <Leg key={x} x={x} />
            ))}
            <path d="M86.5 398v39" stroke="#f00" />
            <Label x={78} y={471}>395</Label>
            <Label x={117} y={399} size={6}>620</Label>
            <Label x={121} y={391} size={6}>7</Label>
            <Label x={75} y={416}>65</Label>
            <Label x={70} y={441} size={7}>35</Label>
            <Label x={208} y={393} size={7}>5</Label>
            <Label x={473} y={472}>2,555</Label>
            <Label x={518} y={482} size={7}>1,000±0</Label>
            <Label x={613} y={482}>500</Label>
            <Label x={620} y={471}>330</Label>
            <Label x={634} y={433}>45</Label>
            <Label x={345} y={591}>4,555</Label>
        </g>
    );
}

function EndView() {
    return (
        <g fill="none">
            <g stroke={WHITE} strokeDasharray="4 2">
                <path d="M662.5 402v54M667.5 405v51M738.5 402v54M743.5 402v54" />
                <path d="M667 404.5h70M667 410.5h70M667 426.5h74M663 431.5h80M663 434.5h80" />
            </g>
            <g stroke={WHITE}>
                <path d="M663.5 455l3 8M666.5 455l-3 8M739.5 455l3 8M742.5 455l-3 8M659 465.5h4M666 465.5h5M660 463.5h9M735 465.5h4M742 465.5h5M737 463.5h8M661 402.5h6M664 405.5h3M735 403.5h9M736 406.5h8" />
                <path d="M738.5 402v8M741.5 401v10" strokeWidth="2" />
            </g>
            <path d="M666.5 403l2-5.5h67l2 6M745 404.5h6M750.5 404v62M744 466.5h7" stroke={PINK} strokeDasharray="3 3" />
            <Label x={695} y={397}>475</Label>
            <text transform="translate(750 443) rotate(-90)" fill={GREEN} fontFamily="Liberation Mono" fontWeight="700" fontSize="8">555</text>
        </g>
    );
}

type BeamProps = { x: number; y: number; rollers?: boolean; mirrored?: boolean };

function Beam({ x, y, rollers = false, mirrored = false }: BeamProps) {
    const pitch = Array.from({ length: 19 }, (_, i) => x + 8 + Math.round(i * 11.8));
    const end = x + 236;
    return (
        <g fill="none">
            <g stroke={PINK} strokeDasharray="3 3">
                <path d={`M${x + 6} ${y + 0.5}h224M${x + 0.5} ${y + 4}v43M${x} ${y + 47.5}h236M${end - 0.5} ${y + 10}v37M${x + 6.5} ${y}v12M${end - 6.5} ${y}v12`} />
                <path d={`M${x + 2} ${y + 3.5}h16v10M${x - 2.5} ${y + 4}v22M${x - 5} ${y + 8.5}h6M${x - 5} ${y + 20.5}h6`} strokeDasharray="2 2" />
                {mirrored ? (
                    <path d={`M${x + 8} ${y + 22}l8 10h14M${end - 50} ${y + 31.5}h48M${end - 41.5} ${y + 22}v8`} strokeDasharray="3 2" />
                ) : (
                    <path d={`M${end - 42} ${y + 39.5}h40M${end - 42.5} ${y + 30}v9M${end - 52} ${y + 31.5}h40M${end - 51.5} ${y + 16}v14M${end - 36.5} ${y + 24}v7M${end - 24.5} ${y + 24}v7M${end - 30.5} ${y + 14}v8`} strokeDasharray="3 2" />
                )}
            </g>
            {/* section at the beam end */}
            <path d={`M${end + 9} ${y + 6.5}h8.5v9h-7v10h7v6h-14M${end + 4.5} ${y + 9}v16M${end + 12.5} ${y + 16}v10`} stroke={PINK} strokeDasharray="2 2" />
            <path d={`M${end + 3} ${y + 7.5}h5M${end + 8} ${y + 4.5}h8M${end + 6.5} ${y + 10}v14M${end + 4} ${y + 30.5}h14M${end + 4} ${y + 28.5}h12M${x - 7} ${y + 16.5}h4M${x - 3.5} ${y + 5}v25M${x + 2} ${y + 2.5}h4M${x + 10} ${y + 2.5}h5M${x + 2} ${y + 28.5}h4`} stroke={GREEN} strokeDasharray="2 1" />
            <path d={`M${end + 10.5} ${y + 9}v6M${end + 14} ${y + 13.5}h3M${end + 10.5} ${y + 21}v4h4`} stroke={WHITE} strokeWidth="2" />
            {rollers &&
                pitch.map((p) => (
                    <g key={p}>
                        <path d={`M${p - 3} ${y + 12.5}h3M${p + 1.5} ${y + 13}v2.5h4`} stroke={WHITE} />
                        <path d={`M${p - 3} ${y + 15.5}h2M${p - 1} ${y + 13.5}h2`} stroke="#f00" />
                    </g>
                ))}
            {!rollers && <path d={`M${x + 18} ${y + 14.5}h200`} stroke={WHITE} strokeDasharray="2 9.8" />}
        </g>
    );
}

function Beams() {
    return (
        <g fill="none">
            <Beam x={846} y={367} rollers />
            <Beam x={846} y={522} />
            <Beam x={1154} y={367} rollers mirrored />
            <Beam x={1154} y={522} mirrored />
            <g stroke="#f00">
                <path d="M847 378.5h232M1155 378.5h235M847 533.5h232M1155 533.5h58M1249 533.5h141M1155 387.5h235M1155 537.5h235M847 542.5h234M1155 542.5h235" />
                <path d="M847 387.5h234M847 537.5h234" strokeDasharray="25 1 8 1" />
                <path d="M970.5 383v4M970.5 538v4M1254.5 538v4M1076.5 378v10M1079.5 378v10M1387.5 378v10M1157.5 533v10M1076.5 533v10" />
            </g>
            <g stroke={WHITE} strokeDasharray="3 3">
                <path d="M846 376.5h237M846 531.5h237M846 545.5h237M1154 545.5h237M1213 534.5h36" />
                <path d="M846 427.5h237M846 434.5h237M1154 427.5h237M1154 434.5h237M846 576.5h237M846 580.5h237M1154 576.5h237M1154 580.5h237" />
                <path d="M846.5 376v14M1082.5 376v14M1154.5 376v14M1390.5 376v14M846.5 427v8M1082.5 427v8M1154.5 427v8M1390.5 427v8M846.5 531v14M1082.5 531v14M1154.5 531v14M1390.5 531v14" />
                <path d="M846 390h237M1154 390h119" strokeWidth="2" strokeDasharray="4 2" />
                <path d="M1273 390.5h118" />
            </g>
            <path d="M1154 376.5h237M1273 389.5h117M846 544.5h237M1154 531.5h60M1249 531.5h142M1154 544.5h237" stroke="#ff0" />
            <path d="M1213.5 528v7M1248.5 525v10M1155 525.5h60M1160 552.5h45M1372.5 528v10" stroke={PINK} strokeDasharray="3 3" />
            <path d="M1272 375v16M1272 428v9M1228 530v17M1284 530v17M1228 575v8M1284 575v8" stroke="#00f" strokeWidth="2" strokeDasharray="5 1" />
            <g>
                <Label x={960} y={368} size={6}>611</Label>
                <Label x={960} y={414} size={6}>611</Label>
                <Label x={882} y={374} size={6}>100</Label>
                <Label x={1019} y={398} size={5}>60.5</Label>
                <Label x={1034} y={398} size={5}>18 25</Label>
                <Label x={1060} y={398} size={5}>35</Label>
                <Label x={1058} y={406} size={6}>75</Label>
                <Label x={1268} y={368} size={6}>175</Label>
                <Label x={1268} y={414} size={6}>600</Label>
                <Label x={1171} y={399} size={6}>55.5</Label>
                <Label x={1326} y={398} size={6}>36 52</Label>
                <Label x={1378} y={398} size={6}>60</Label>
                <Label x={960} y={523} size={6}>611</Label>
                <Label x={960} y={569} size={6}>611</Label>
                <Label x={1019} y={553} size={5}>60.5</Label>
                <Label x={1034} y={553} size={5}>18 25</Label>
                <Label x={1060} y={553} size={5}>35</Label>
                <Label x={1058} y={561} size={6}>75</Label>
                <Label x={1268} y={522} size={6}>175</Label>
                <Label x={1268} y={569} size={6}>600</Label>
                <Label x={1179} y={526} size={6}>10</Label>
                <Label x={1228} y={526} size={6}>65 2</Label>
                <Label x={1160} y={553} size={6}>36</Label>
                <Label x={1196} y={553} size={6}>52 60.5</Label>
            </g>
        </g>
    );
}

function Canvas() {
    return (
        <div className="relative min-h-0 flex-1 overflow-hidden bg-black">
            <svg className="block h-[703px] w-[1355px]" viewBox="58 74 1355 703" role="img" aria-label="模型空间">
                <Conveyor />
                <EndView />
                <Beams />
            </svg>
            <button aria-label="视图方向" className="absolute top-[29px] left-[29px] flex size-[52px] items-center justify-center border border-[#777] bg-[#a2a2a2]">
                <span className="flex size-8 items-center justify-center bg-[#8f979b] font-['Noto_Sans_CJK_SC',sans-serif] text-[32px] leading-8 font-light text-[#484d51]">
                    上
                </span>
            </button>
        </div>
    );
}

/* ---------- layout tabs, command line ---------- */

const layouts = [
    "USGSB60-0000-HL3",
    "USGSB60-0001-HL3",
    "USGSB60-0002-HL3",
    "USGSB60-0003-HL3",
    "USGSB60-0004-HL3",
    "USGSB60-0004-HL3 (2)",
];

function LayoutTabs() {
    return (
        <div className="flex h-4 shrink-0 items-stretch border-t border-[#444] bg-[#d4d0c8] pl-0.5">
            {["M4.5 3v8M11 3v8L6 7z", "M10 3v8L5 7z", "M5 3v8l5-4z", "M10.5 3v8M4 3v8l5-4z"].map((d) => (
                <button key={d} aria-label="翻页" className="flex w-3.5 items-center border border-t-white border-r-[#777] border-b-[#777] border-l-white">
                    <svg className="h-3 w-3" viewBox="1 1 13 13"><path d={d} fill="#777" stroke="#777" /></svg>
                </button>
            ))}
            <button className="w-[46px] bg-black font-['Noto_Sans_CJK_SC',sans-serif] text-[12px] leading-[14px] text-white [clip-path:polygon(0_0,100%_0,calc(100%-6px)_100%,7px_100%)]">
                模型
            </button>
            {layouts.map((name) => (
                <button key={name} className="flex h-3.5 items-center border-b border-[#777]">
                    <span className="pl-1 font-['DejaVu_Sans_Mono',monospace] text-[10px] leading-[14px] whitespace-pre text-black">{name}</span>
                    <svg className="h-3.5 w-3" viewBox="0 0 12 14">
                        <path d="M4 14L10 0" stroke="#222" />
                        <path d="M5 14L11 0" stroke="#888" />
                        <path d="M9 6l2 8" stroke="#fff" />
                    </svg>
                </button>
            ))}
        </div>
    );
}

const raised = "flex items-center justify-center border border-t-white border-l-white border-r-[#555] border-b-[#555] bg-[#d4d0c8]";

function CommandLine() {
    return (
        <div className="flex h-9 shrink-0 bg-white text-[#222]">
            <div className="w-[17px] shrink-0 bg-[#a0a0a0]">
                <div className="mx-auto mt-0.5 h-1 w-3 bg-[linear-gradient(90deg,#111_1px,transparent_1px)] bg-size-[2px_2px]" />
            </div>
            <div className="flex min-w-0 flex-1 flex-col">
                <div className="flex h-[18px] border-b border-[#888]">
                    <p className="flex flex-1 items-start gap-2 leading-[14px]">
                        <span className="flex">
                            <span className="font-['Noto_Sans_CJK_SC',sans-serif] text-[16px]">命令</span>
                            <span className="w-2 font-['Liberation_Mono',monospace] text-[13px]">:</span>
                        </span>
                        <span className="w-20 font-['Liberation_Mono',monospace] text-[13px]">_ai_selall</span>
                        <span className="flex font-['Noto_Sans_CJK_SC',sans-serif] text-[16px]">
                            正在选择对象
                            <span className="w-6 font-['Liberation_Mono',monospace] text-[13px]">...</span>
                            完成。
                        </span>
                    </p>
                    <div className="flex w-[15px] flex-col">
                        <button aria-label="向上" className={`${raised} flex-1`}>
                            <span className="size-0 border-x-2 border-b-2 border-x-transparent border-b-black" />
                        </button>
                        <button aria-label="向下" className={`${raised} flex-1`}>
                            <span className="size-0 border-x-2 border-t-2 border-x-transparent border-t-black" />
                        </button>
                    </div>
                </div>
                <div className="flex h-[18px] border-b border-black">
                    <label htmlFor="command" className="flex items-start leading-4">
                        <span className="font-['Noto_Sans_CJK_SC',sans-serif] text-[16px]">命令</span>
                        <span className="font-['Liberation_Mono',monospace] text-[13px]">:</span>
                    </label>
                    <input id="command" className="min-w-0 flex-1 pl-1 text-[13px] outline-none" />
                    <div className="flex w-[65px] bg-[#e6e3dd] pl-1">
                        <button aria-label="向左" className={`${raised} w-[15px]`}>
                            <span className="size-0 border-y-4 border-r-4 border-y-transparent border-r-black" />
                        </button>
                        <span className={`${raised} w-[15px]`} />
                        <span className="flex-1 bg-[#e6e3dd]" />
                        <button aria-label="向右" className={`${raised} w-[15px]`}>
                            <span className="size-0 border-y-4 border-l-4 border-y-transparent border-l-black" />
                        </button>
                    </div>
                    <span className="w-4 border border-white bg-[#d4d0c8]" />
                </div>
            </div>
        </div>
    );
}

/* ---------- status bar, task bar ---------- */

function StatusButton({ name, active = false }: { name: string; active?: boolean }) {
    return (
        <button
            aria-label={name}
            className={`flex w-[22px] shrink-0 items-center justify-center border-l border-[#666] ${active ? "bg-linear-to-b from-[#d3edf3] to-[#8fc3d0]" : "bg-linear-to-b from-[#c4c4c4] to-[#a0a0a0]"}`}
        >
            <Icon name={name} />
        </button>
    );
}

function StatusBar() {
    const light = "bg-linear-to-b from-[#c4c4c4] to-[#a0a0a0]";
    return (
        <div className="flex h-[23px] shrink-0 items-stretch bg-linear-to-b from-[#979797] to-[#7a7a7a] text-black">
            <output className="flex w-[175px] items-center pt-1 pl-3 font-['DejaVu_Sans_Mono',monospace] text-[10px] whitespace-pre">
                -3393.63, -4082.68, 0.00
            </output>
            {["snap", "grid", "ortho", "polar", "osnap", "otrack", "ducs", "dyn", "lwt", "qp"].map((n) => (
                <StatusButton key={n} name={n} active={n === "polar" || n === "osnap"} />
            ))}
            <div className="flex-1 border-l border-[#666]" />
            <StatusButton name="model" />
            <StatusButton name="layouts" />
            <div className="w-[17px]" />
            {["pan", "zoom", "wheel", "motion"].map((n) => (
                <StatusButton key={n} name={n} />
            ))}
            <div className="w-[18px]" />
            <button className={`flex w-[54px] items-center gap-0.5 border-l border-[#666] ${light}`}>
                <Icon name="anno" />
                <span className="font-['DejaVu_Sans_Mono',monospace] text-[10px]">1:1</span>
                <span className="size-0 border-x-4 border-t-4 border-x-transparent border-t-black" />
            </button>
            <StatusButton name="annoVis" />
            <StatusButton name="annoAuto" />
            <div className="w-1.5 bg-[#666]" />
            <button className={`flex w-[120px] items-center gap-px border-l border-[#666] ${light}`}>
                <Icon name="gear" />
                <span className="font-['Noto_Sans_CJK_SC',sans-serif] text-[12px] leading-4">二维草图与注释</span>
                <span className="ml-1 size-0 border-x-4 border-t-4 border-x-transparent border-t-black" />
            </button>
            <div className={`flex w-[9px] items-center overflow-hidden border-l border-[#666] ${light}`}>
                <Icon name="lock" />
            </div>
            <div className="flex w-11 items-center gap-0.5 border-t-2 border-[#444] bg-[#999] pl-0.5">
                <Icon name="tray" />
                <Icon name="xref" />
            </div>
            <button aria-label="状态栏菜单" className={`ml-1.5 flex w-[11px] items-center justify-center ${light}`}>
                <Down className="border-t-black" />
            </button>
            <StatusButton name="window" />
            <svg className="h-[23px] w-4" viewBox="0 0 16 23">
                <path d="M12 12h2M8 16h2M12 16h2M4 20h2M8 20h2M12 20h2" stroke="#ddd" strokeWidth="2" />
            </svg>
        </div>
    );
}

const task = "flex h-[38px] items-center justify-center border-2 border-t-white border-l-white border-r-[#555] border-b-[#555] bg-[#d4d0c8]";

function TaskBar() {
    return (
        <footer className="relative flex h-[43px] shrink-0 items-center border-t-2 border-white bg-[#d4d0c8] px-0.5">
            <button className={`${task} w-[47px] gap-0.5`}>
                <svg className="h-4 w-4" viewBox="0 0 16 16">
                    <path d="M2 2c2-1 4-1 6 0L7 7C5 6 3 6 1 7z" fill="#e8502c" />
                    <path d="M9 2c2 1 4 1 7 0l-2 5c-2 1-4 1-6 0z" fill="#6fb53c" />
                    <path d="M1 8c2-1 4-1 6 0l-1 5c-2-1-4-1-6 0z" fill="#3b84d0" />
                    <path d="M8 8c2 1 4 1 6 0l-2 6c-2 0-4 0-5-1z" fill="#f4bd29" />
                </svg>
                <span className="font-['Noto_Sans_CJK_SC',sans-serif] text-[12px] leading-4 text-black">开始</span>
            </button>
            <button aria-label="浏览器" className="ml-[17px] flex w-[34px] justify-center">
                <svg className="h-8 w-8" viewBox="0 0 32 32" fill="none">
                    <path d="M8 17.5h20c0-15-21-15-21 0 0 13 17 14 20 4" stroke="#1b78b8" strokeWidth="6" />
                    <path d="M8 17.5h19c0-13-19-13-19 0 0 12 15 13 18 4" stroke="#4fbcf0" strokeWidth="4" />
                    <path d="M3 29C-3 22 20-1 30 4c1 1 1 3 0 6" stroke="#f3b51c" strokeWidth="2.5" />
                </svg>
            </button>
            <button aria-label="资源管理器" className={`${task} ml-2 w-10`}>
                <svg className="h-8 w-8" viewBox="0 0 32 32">
                    <path d="M1 4h10l2 3h16v22H1z" fill="#f4d877" stroke="#b98d2c" />
                    <path d="M4 3h5v2H4z" fill="#2da63c" />
                    <path d="M13 5h4v2h-4z" fill="#d33" />
                    <path d="M21 6h5v2h-5z" fill="#38d" />
                    <path d="M2 10h28v18H2z" fill="#fae9a6" stroke="#cfa748" />
                    <path d="M5 31V20h22v11h-4v-6H9v6z" fill="#9bd5f0" stroke="#5aa3c8" />
                </svg>
            </button>
            <span className="h-[38px] w-1 border-r border-[#555]" />
            <span className="h-[38px] w-1 border-r border-[#555]" />
            <button aria-label="搜狗浏览器" className={`${task} ml-[2px] w-12`}>
                <svg className="h-8 w-8" viewBox="0 0 32 32">
                    <circle cx="16" cy="16" r="15" fill="#f3f6f8" stroke="#8ba3b4" />
                    <circle cx="16" cy="16" r="13" fill="#1c86cd" />
                    <path d="M24 6C17 1 6 5 7 12c1 6 11 5 10 10-1 4-6 5-10 3 6 6 18 4 18-4 0-7-11-6-10-11 0-4 5-5 9-4z" fill="#fff" />
                </svg>
            </button>
            <button aria-label="QQ" className="flex w-[52px] justify-center">
                <svg className="h-8 w-8" viewBox="0 0 32 32">
                    <path d="M7 18C4 22 2 26 4 27l4-3M25 18c3 4 5 8 3 9l-4-3" fill="#111" />
                    <ellipse cx="16" cy="20" rx="11" ry="11" fill="#111" />
                    <ellipse cx="16" cy="22" rx="8" ry="8" fill="#fff" />
                    <circle cx="16" cy="10" r="9.5" fill="#111" />
                    <ellipse cx="13" cy="8" rx="2" ry="3" fill="#fff" />
                    <ellipse cx="19" cy="8" rx="2" ry="3" fill="#fff" />
                    <ellipse cx="16" cy="13" rx="6" ry="2" fill="#f5a31c" />
                    <path d="M5 15c6 4 16 4 22 0l1 4c-7 4-16 4-24 0z" fill="#dd2b22" />
                    <path d="M9 19h4v6H9z" fill="#dd2b22" />
                    <ellipse cx="9" cy="29.5" rx="6" ry="2.5" fill="#f5a31c" />
                    <ellipse cx="23" cy="29.5" rx="6" ry="2.5" fill="#f5a31c" />
                </svg>
            </button>
            <button aria-label="AutoCAD" className={`${task} w-12`}>
                <svg className="h-8 w-8" viewBox="0 0 32 32">
                    <path d="M2 9h28v21H2z" fill="#f5f5f5" stroke="#bbb" />
                    <path d="M4 22L8 1h7l7 20-5 1-2-4h-5l-1 6z" fill="#c81f26" />
                    <path d="M12 8l2 6h-4z" fill="#f5f5f5" />
                    <text x="21" y="17" fill="#d01818" fontFamily="Liberation Sans" fontWeight="700" fontSize="7">20</text>
                    <text x="21" y="24" fill="#d01818" fontFamily="Liberation Sans" fontWeight="700" fontSize="7">10</text>
                </svg>
            </button>
            <button aria-label="Excel" className={`${task} ml-0.5 w-11`}>
                <svg className="h-[30px] w-[30px]" viewBox="0 0 30 30">
                    <path d="M1 1h28v28H1z" fill="#388c38" stroke="#1d5d1d" />
                    <path d="M4 4h22v22H4z" fill="#e8f4e3" />
                    <path d="M15 10h10M15 14h10M15 18h10M15 22h10M20 6v19" stroke="#8cba84" />
                    <path d="M7 7l12 16M19 7L7 23" stroke="#27792d" strokeWidth="4" />
                </svg>
            </button>
            <span className="h-[38px] w-1 border-r border-[#555]" />
            <div className="ml-auto flex items-center">
                <svg className="h-5 w-5" viewBox="0 0 18 18" fill="none" stroke="#888">
                    <path d="M1.5 7.5h14v8h-14zM5 7c0-4 5-1 8-5M4 10h9M4 12h9" />
                </svg>
                <span className="mx-1 h-5 w-px bg-[#777]" />
                <div className="flex h-[38px] w-24 items-center justify-between border border-t-[#777] border-r-white border-b-white border-l-[#777] pl-1">
                    <svg className="h-3 w-2" viewBox="0 0 8 12"><path d="M1 5l3-3 3 3M1 10l3-3 3 3" fill="none" stroke="#000" /></svg>
                    <time className="self-start pt-[3px] font-['DejaVu_Sans_Mono',monospace] text-[10px] leading-4 text-black">11:20</time>
                    <svg className="h-4 w-4" viewBox="0 0 16 16">
                        <path d="M1 3h14v9H1z" fill="#1f6fd6" stroke="#2a4b78" />
                        <path d="M2 4h12L2 9z" fill="#6fb4f3" />
                        <path d="M2 10h4v3H2z" fill="#e9b52c" />
                    </svg>
                </div>
            </div>
            <p className="pointer-events-none absolute right-[18px] bottom-1 flex items-center leading-[18px] font-bold text-white [paint-order:stroke_fill] [-webkit-text-stroke:2px_#e3252b]">
                <span className="font-['Noto_Sans_CJK_SC',sans-serif] text-[17px]">三维网</span>
                <span className="font-['DejaVu_Sans',sans-serif] text-[16px]">www.3dportal.cn</span>
            </p>
        </footer>
    );
}

function ToolPalette() {
    return (
        <aside className="flex w-[26px] shrink-0 bg-[#666] pt-[3px] pb-0.5 pl-1">
            <div className="flex flex-1 flex-col border-2 border-[#444] bg-linear-to-r from-[#929292] to-[#6c6c6c]">
                <Grip />
                <h2 className="m-auto flex rotate-180 gap-2 font-['Noto_Sans_CJK_SC',sans-serif] text-[13px] leading-4 font-bold text-white [text-orientation:sideways] [writing-mode:vertical-rl]">
                    <span>工具选项板</span>
                    <span>-</span>
                    <span>所有选项板</span>
                </h2>
            </div>
        </aside>
    );
}

export default function App() {
    return (
        <div className="flex h-screen flex-col overflow-hidden bg-[#666] select-none">
            <Header />
            <Toolbars />
            <div className="flex min-h-0 flex-1">
                <div className="flex min-w-0 flex-1 flex-col">
                    <div className="flex min-h-0 flex-1 pb-1">
                        <div className="flex w-7 shrink-0 flex-col overflow-hidden">
                            <VBar items={draw} className="shrink-0" />
                            <VBar items={modify} className="min-h-0 flex-1" />
                        </div>
                        <div className="flex w-[30px] shrink-0 flex-col overflow-hidden">
                            <VBar items={osnap} className="shrink-0" />
                            <VBar items={dims} className="min-h-0 flex-1" />
                        </div>
                        <main className="flex min-w-0 flex-1 flex-col border-t border-r border-b border-t-[#999] border-r-white border-b-white">
                            <Canvas />
                            <LayoutTabs />
                        </main>
                    </div>
                    <CommandLine />
                </div>
                <ToolPalette />
            </div>
            <StatusBar />
            <TaskBar />
        </div>
    );
}
